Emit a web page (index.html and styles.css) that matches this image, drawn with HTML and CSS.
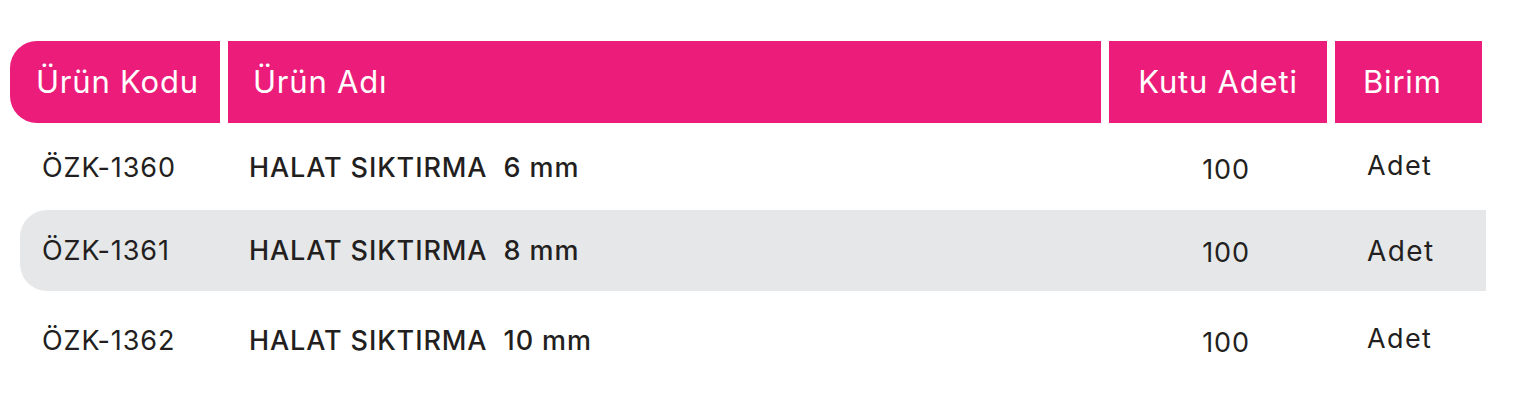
FILE: index.html
```html
<!DOCTYPE html>
<html lang="tr">
<head>
<meta charset="utf-8">
<link rel="stylesheet" href="styles.css">
</head>
<body>
<div class="table">
  <div class="head">
    <div class="hc hc-code">Ürün Kodu</div>
    <div class="hc hc-name">Ürün Adı</div>
    <div class="hc hc-qty">Kutu Adeti</div>
    <div class="hc hc-unit">Birim</div>
  </div>
  <div class="row r1">
    <div class="c-code">ÖZK-1360</div>
    <div class="c-name">HALAT SIKTIRMA&nbsp; 6 mm</div>
    <div class="c-qty">100</div>
    <div class="c-unit">Adet</div>
  </div>
  <div class="row r2 alt">
    <div class="c-code">ÖZK-1361</div>
    <div class="c-name">HALAT SIKTIRMA&nbsp; 8 mm</div>
    <div class="c-qty">100</div>
    <div class="c-unit">Adet</div>
  </div>
  <div class="row r3">
    <div class="c-code">ÖZK-1362</div>
    <div class="c-name">HALAT SIKTIRMA&nbsp; 10 mm</div>
    <div class="c-qty">100</div>
    <div class="c-unit">Adet</div>
  </div>
</div>
</body>
</html>
```
FILE: styles.css
```css
html, body {
  margin: 0;
  padding: 0;
  background: #ffffff;
}
body {
  font-family: "Inter", "Liberation Sans", sans-serif;
  color: #231f20;
}
.table {
  padding: 41px 0 0 10px;
  width: 1476px;
}
.head {
  display: grid;
  grid-template-columns: 210px 873px 218px 147px;
  column-gap: 8px;
  height: 82px;
}
.hc {
  background: #ec1c7a;
  color: #ffffff;
  font-size: 31px;
  letter-spacing: 0.8px;
  display: flex;
  align-items: center;
  padding-bottom: 2px;
}
.hc-code {
  border-radius: 27px 0 0 27px;
  padding-left: 26px;
}
.hc-name { padding-left: 25px; }
.hc-qty { justify-content: center; }
.hc-unit { padding-left: 28px; }

.row {
  display: grid;
  grid-template-columns: 219px 873px 218px 147px;
  column-gap: 8px;
  height: 82px;
  align-items: center;
  margin-left: 10px;
  width: 1466px;
  font-size: 27px;
  letter-spacing: 0.9px;
}
.r1 { margin-top: 3px; }
.r2 { margin-top: 2px; height: 81px; }
.r3 { margin-top: 8px; }
.alt {
  background: #e6e7e8;
  border-radius: 27px 0 0 27px;
}
.c-code {
  padding-left: 22px;
}
.c-name {
  font-weight: 500;
  padding-left: 2px;
}
.c-qty {
  text-align: center;
  padding-right: 22px;
  padding-top: 4px;
}
.c-unit {
  padding-left: 13px;
  letter-spacing: 1.4px;
}
.r1 .c-unit { padding-bottom: 3px; }
.r2 .c-unit { font-size: 28px; }
.r3 .c-unit { padding-bottom: 3px; }
```
